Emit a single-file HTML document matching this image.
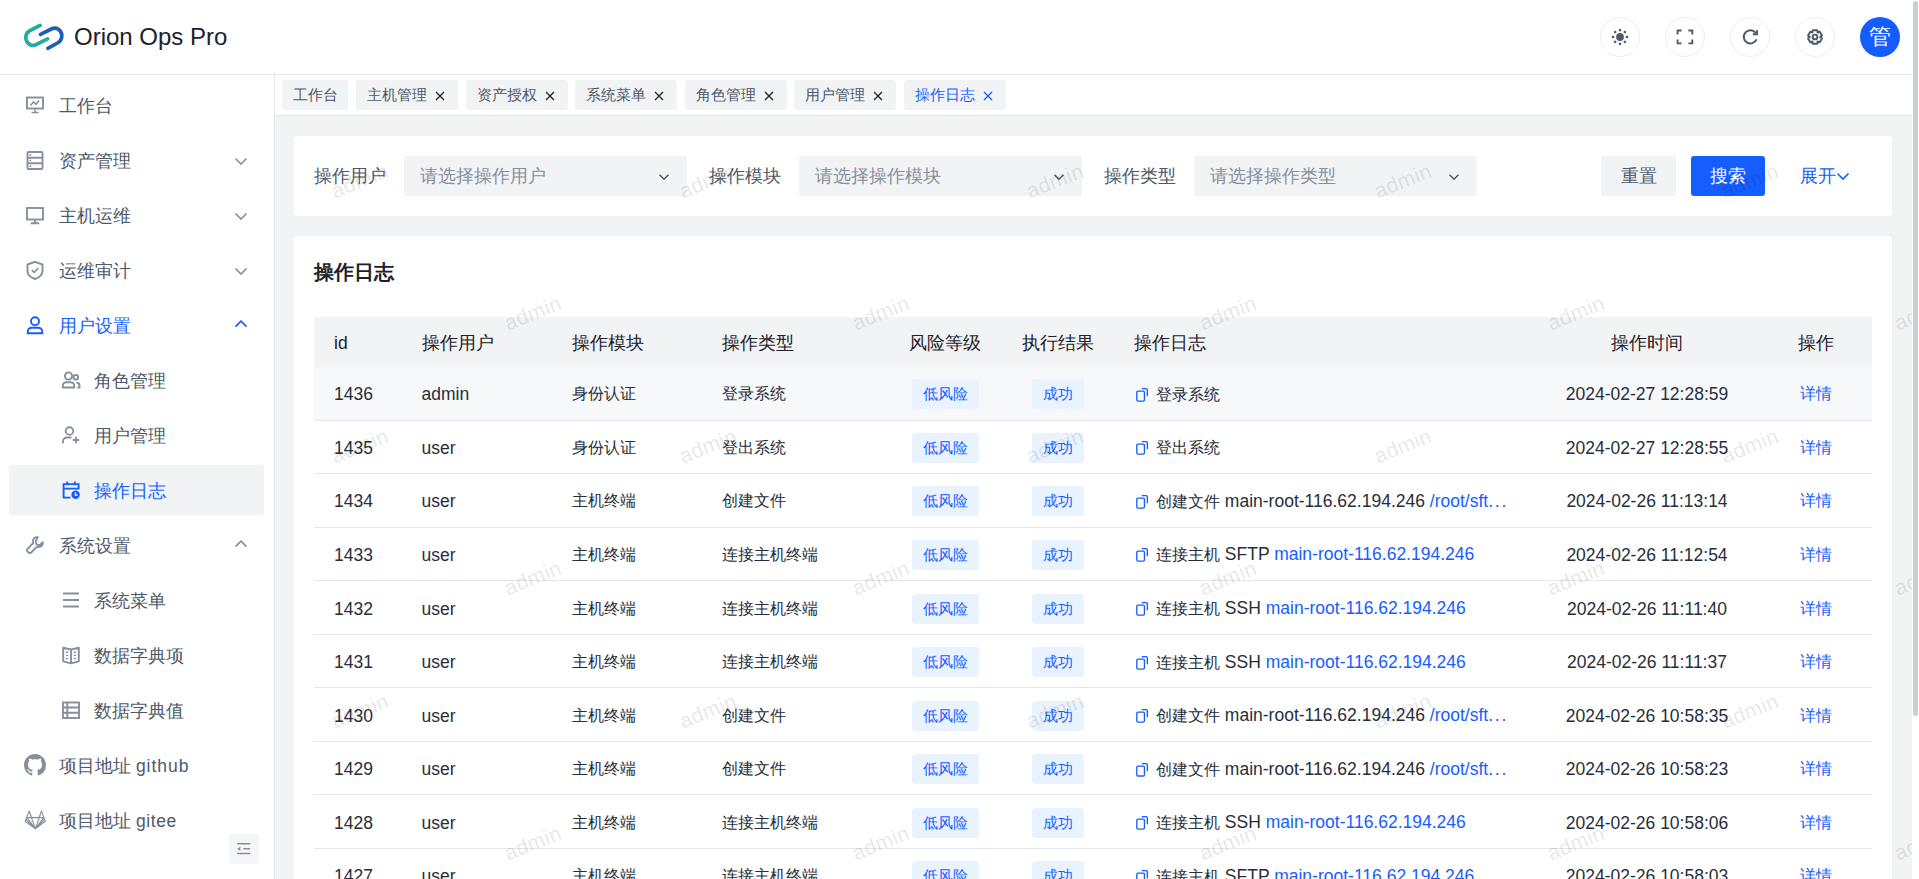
<!DOCTYPE html>
<html><head><meta charset="utf-8"><style>
*{box-sizing:border-box;margin:0;padding:0}
html,body{width:1919px;height:879px;overflow:hidden;background:#fff;font-family:"Liberation Sans",sans-serif;color:#1d2129}
.a{position:absolute}
#header{position:absolute;left:0;top:0;width:1912px;height:75px;background:#fff;border-bottom:1px solid #e5e6eb}
#sider{position:absolute;left:0;top:75px;width:275px;height:804px;background:#fff;border-right:1px solid #e5e6eb}
#tabs{position:absolute;left:275px;top:75px;width:1637px;height:41px;background:#fff;border-bottom:1px solid #e5e6eb}
#content{position:absolute;left:275px;top:116px;width:1637px;height:763px;background:#f2f3f5}
#sb{position:absolute;left:1912px;top:0;width:7px;height:879px;background:#fff}
#thumb{position:absolute;left:1913px;top:1px;width:5px;height:715px;border-radius:3px;background:#c9cdd4}
.title{position:absolute;left:74px;top:21px;font-size:24px;line-height:32px;color:#1d2129;white-space:nowrap}
.hbtn{position:absolute;top:17px;width:40px;height:40px;border-radius:50%;border:1px solid #eceef2;background:#fff}
.hbtn svg{position:absolute;left:0;top:0}
.avatar{position:absolute;left:1860px;top:17px;width:40px;height:40px;border-radius:50%;background:#165dff;color:#fff;font-size:22px;line-height:40px;text-align:center;font-weight:500}
.mi{position:absolute;left:0;width:275px;height:50px;font-size:17.5px;line-height:50px;color:#4e5969;white-space:nowrap}
.mi .t{position:absolute;left:59px;top:1px}
.mi.sub .t{left:94px}
.mi svg{position:absolute}
.mi.on{color:#165dff}
.actbg{position:absolute;left:9px;top:465px;width:255px;height:50px;background:#f2f3f5;border-radius:3px}
.tab{position:absolute;top:80px;height:30px;background:#f2f3f5;border-radius:3px;font-size:15px;line-height:30px;color:#4e5969;white-space:nowrap}
.tab .t{position:absolute;left:11px;top:0}
.tab svg{position:absolute;top:10px}
.tab.on{color:#165dff}

.td .z{font-size:0.9em}
.tab .z{font-size:1em}
.wm{position:absolute;width:80px;height:30px;line-height:30px;text-align:center;font-size:21px;color:rgba(0,0,0,0.11);transform:rotate(-22deg);white-space:nowrap;letter-spacing:0.5px}
.card{position:absolute;background:#fff;border-radius:4px}
.lab{position:absolute;height:40px;line-height:40px;font-size:17.5px;color:#4e5969;white-space:nowrap}
.sel{position:absolute;width:283px;height:40px;background:#f2f3f5;border-radius:3px}
.sel .ph{position:absolute;left:16px;top:0;line-height:40px;font-size:17.5px;color:#86909c;white-space:nowrap}
.btn{position:absolute;height:40px;line-height:40px;text-align:center;font-size:17.5px;border-radius:3px;white-space:nowrap}
.th{position:absolute;height:50px;line-height:50px;font-size:17.5px;color:#1d2129;white-space:nowrap}
.tr{position:absolute;left:314px;width:1558px;border-bottom:1px solid #e5e6eb}
.td{position:absolute;top:1.5px;height:100%;display:flex;align-items:center;font-size:17.5px;color:#272e3a;white-space:nowrap}
.td.c{justify-content:center}
.tag{position:absolute;top:50%;margin-top:-14px;height:30px;line-height:30px;text-align:center;font-size:15px;color:#165dff;background:#e8f3ff;border-radius:3px}
.cp{margin-right:7px;flex:none}
</style></head><body>
<div id="header">
<svg class="a" style="left:20px;top:19px" width="48" height="36" viewBox="0 0 48 36">
<path d="M20.1 6.4 L9.5 11.9 C5.5 14 5 19.5 6.8 22.5 C8.6 25.8 12.5 27.3 15.5 25.8 L27.5 19.9" fill="none" stroke="#22aaa3" stroke-width="3.7" stroke-linecap="round"/>
<path d="M20.5 15.4 L31.3 10 C36 7.6 41.5 10.5 41.8 16.5 C42 20.5 40 22.5 37.5 24 L27.9 29.3" fill="none" stroke="#1d5fb3" stroke-width="3.7" stroke-linecap="round"/>
</svg>
<div class="title">Orion Ops Pro</div>
</div>
<div class="hbtn" style="left:1600px"><svg width="40" height="40" style="left:-1px;top:-1px"><circle cx="20" cy="20" r="3.9" fill="#4e5969"/><rect x="18.85" y="11.95" width="2.3" height="2.3" fill="#4e5969" transform="rotate(0 20.00 13.10)"/><rect x="23.73" y="13.97" width="2.3" height="2.3" fill="#4e5969" transform="rotate(45 24.88 15.12)"/><rect x="25.75" y="18.85" width="2.3" height="2.3" fill="#4e5969" transform="rotate(90 26.90 20.00)"/><rect x="23.73" y="23.73" width="2.3" height="2.3" fill="#4e5969" transform="rotate(135 24.88 24.88)"/><rect x="18.85" y="25.75" width="2.3" height="2.3" fill="#4e5969" transform="rotate(180 20.00 26.90)"/><rect x="13.97" y="23.73" width="2.3" height="2.3" fill="#4e5969" transform="rotate(225 15.12 24.88)"/><rect x="11.95" y="18.85" width="2.3" height="2.3" fill="#4e5969" transform="rotate(270 13.10 20.00)"/><rect x="13.97" y="13.97" width="2.3" height="2.3" fill="#4e5969" transform="rotate(315 15.12 15.12)"/></svg></div>
<div class="hbtn" style="left:1665px"><svg width="40" height="40" style="left:-1px;top:-1px" fill="none" stroke="#4e5969" stroke-width="1.9" stroke-linecap="butt">
<path d="M12.6 17.4V13.5H16.5 M23.4 13.5H27.3V17.4 M27.3 22.6V26.4H23.4 M16.5 26.4H12.6V22.6"/></svg></div>
<div class="hbtn" style="left:1730px"><svg width="40" height="40" style="left:-1px;top:-1px" fill="none" stroke="#4e5969" stroke-width="2">
<path d="M26.5 22.4 A6.6 6.6 0 1 1 25.6 15.8"/><path d="M27 13.2V17.2H22.8"/></svg></div>
<div class="hbtn" style="left:1795px"><svg width="40" height="40" style="left:-1px;top:-1px" fill="none" stroke="#4e5969" stroke-width="1.9" stroke-linejoin="round">
<path d="M17.83 13.24 L22.17 13.24 L22.90 15.57 L22.39 15.27 L24.77 14.74 L26.94 18.49 L25.29 20.30 L25.29 19.70 L26.94 21.51 L24.77 25.26 L22.39 24.73 L22.90 24.43 L22.17 26.76 L17.83 26.76 L17.10 24.43 L17.61 24.73 L15.23 25.26 L13.06 21.51 L14.71 19.70 L14.71 20.30 L13.06 18.49 L15.23 14.74 L17.61 15.27 L17.10 15.57Z"/><circle cx="20" cy="20" r="2.4"/></svg></div>
<div class="avatar"><span class="z">管</span></div>
<div id="sider"></div>
<div class="actbg"></div>
<div class="mi" style="top:80px;color:#4e5969">
<div class="a" style="left:25px;top:15px;width:20px;height:20px"><svg width="20" height="20" viewBox="0 0 20 20" fill="none" stroke="#86909c" stroke-width="1.9"><rect x="2" y="2.5" width="16" height="11"/><path d="M10 13.5V18 M6.5 17.5H13.5 M5.5 10.5L8.5 6.8L11 9.3L14 5.5" stroke-width="1.5"/></svg></div>
<span class="t"><span class="z">工作台</span></span>
</div>
<div class="mi" style="top:135px;color:#4e5969">
<div class="a" style="left:25px;top:15px;width:20px;height:20px"><svg width="20" height="20" viewBox="0 0 20 20" fill="none" stroke="#86909c" stroke-width="1.9"><rect x="2.5" y="2" width="15" height="17" rx="1"/><path d="M2.5 7.7H17.5 M2.5 13.3H17.5"/><path d="M4.6 4.85h1.6 M4.6 10.5h1.6 M4.6 16.15h1.6" stroke-width="1.6"/></svg></div>
<span class="t"><span class="z">资产管理</span></span>
</div>
<svg class="a" style="left:234px;top:154px" width="14" height="14" fill="none" stroke="#86909c" stroke-width="1.6"><path d="M1.5 4.5L7 10L12.5 4.5"/></svg>
<div class="mi" style="top:190px;color:#4e5969">
<div class="a" style="left:25px;top:15px;width:20px;height:20px"><svg width="20" height="20" viewBox="0 0 20 20" fill="none" stroke="#86909c" stroke-width="1.9"><rect x="2" y="3" width="16" height="11.5"/><path d="M10 14.5V18.2 M5.8 18.2H14.2"/></svg></div>
<span class="t"><span class="z">主机运维</span></span>
</div>
<svg class="a" style="left:234px;top:209px" width="14" height="14" fill="none" stroke="#86909c" stroke-width="1.6"><path d="M1.5 4.5L7 10L12.5 4.5"/></svg>
<div class="mi" style="top:245px;color:#4e5969">
<div class="a" style="left:25px;top:15px;width:20px;height:20px"><svg width="20" height="20" viewBox="0 0 20 20" fill="none" stroke="#86909c" stroke-width="1.9"><path d="M10 1.8L17.5 4.5V11C17.5 15 13.5 17.8 10 19C6.5 17.8 2.5 15 2.5 11V4.5Z"/><path d="M6.8 10.2L9.2 12.4L13.4 8" stroke-width="1.7"/></svg></div>
<span class="t"><span class="z">运维审计</span></span>
</div>
<svg class="a" style="left:234px;top:264px" width="14" height="14" fill="none" stroke="#86909c" stroke-width="1.6"><path d="M1.5 4.5L7 10L12.5 4.5"/></svg>
<div class="mi on" style="top:300px;color:#165dff">
<div class="a" style="left:25px;top:15px;width:20px;height:20px"><svg width="20" height="20" viewBox="0 0 20 20" fill="none" stroke="#165dff" stroke-width="1.9"><circle cx="10" cy="6.3" r="4"/><path d="M2.8 18.2V16.5C2.8 14.3 4.6 12.8 6.8 12.8H13.2C15.4 12.8 17.2 14.3 17.2 16.5V18.2Z"/></svg></div>
<span class="t"><span class="z">用户设置</span></span>
</div>
<svg class="a" style="left:234px;top:319px" width="14" height="14" fill="none" stroke="#165dff" stroke-width="1.6"><path d="M1.5 7.6L7 2.1L12.5 7.6"/></svg>
<div class="mi sub" style="top:355px;color:#4e5969">
<div class="a" style="left:61px;top:15px;width:20px;height:20px"><svg width="20" height="20" viewBox="0 0 20 20" fill="none" stroke="#86909c" stroke-width="1.9"><circle cx="7.5" cy="6" r="3.6"/><path d="M1.8 17.5V15.8C1.8 13.8 3.4 12.3 5.4 12.3H9.6C11.6 12.3 13.2 13.8 13.2 15.8V17.5Z"/><circle cx="14.8" cy="7.3" r="2.3"/><path d="M15.5 12.5C17.3 12.7 18.5 14 18.5 15.8V17.5H16.4"/></svg></div>
<span class="t"><span class="z">角色管理</span></span>
</div>
<div class="mi sub" style="top:410px;color:#4e5969">
<div class="a" style="left:61px;top:15px;width:20px;height:20px"><svg width="20" height="20" viewBox="0 0 20 20" fill="none" stroke="#86909c" stroke-width="1.9"><circle cx="8.5" cy="6" r="3.8"/><path d="M2 18.2V16.5C2 14.2 3.8 12.5 6 12.5H10.5 M15 11.8V18.2 M11.8 15H18.2"/></svg></div>
<span class="t"><span class="z">用户管理</span></span>
</div>
<div class="mi sub on" style="top:465px;color:#165dff">
<div class="a" style="left:61px;top:15px;width:20px;height:20px"><svg width="20" height="20" viewBox="0 0 20 20" fill="none" stroke="#165dff" stroke-width="1.9"><path d="M9.5 17.6H2.6V4.1H17.6V9.6 M2.6 8.6H17.6 M6.2 1.6V5.2 M13.8 1.6V5.2"/><circle cx="14.6" cy="14.8" r="4.2" fill="#165dff" stroke="none"/><path d="M14.4 12.6V15.2H16.6" stroke="#fff" stroke-width="1.3"/></svg></div>
<span class="t"><span class="z">操作日志</span></span>
</div>
<div class="mi" style="top:520px;color:#4e5969">
<div class="a" style="left:25px;top:15px;width:20px;height:20px"><svg width="20" height="20" viewBox="0 0 20 20" fill="none" stroke="#86909c" stroke-width="1.9"><path d="M12.8 2.2C10.3 1.6 7.8 3.7 8 6.3C8 6.9 8.1 7.5 8.3 8L2.5 13.8C1.8 14.5 1.8 15.8 2.5 16.5L3.5 17.5C4.2 18.2 5.5 18.2 6.2 17.5L12 11.7C12.5 11.9 13.1 12 13.7 12C16.3 12.2 18.4 9.7 17.8 7.2L14.8 10.2L11.6 9.4L10.8 6.2Z" stroke-linejoin="round"/></svg></div>
<span class="t"><span class="z">系统设置</span></span>
</div>
<svg class="a" style="left:234px;top:539px" width="14" height="14" fill="none" stroke="#86909c" stroke-width="1.6"><path d="M1.5 7.6L7 2.1L12.5 7.6"/></svg>
<div class="mi sub" style="top:575px;color:#4e5969">
<div class="a" style="left:61px;top:15px;width:20px;height:20px"><svg width="20" height="20" viewBox="0 0 20 20" fill="none" stroke="#86909c" stroke-width="1.9"><path d="M2 3.5H18 M2 10H18 M2 16.5H18"/></svg></div>
<span class="t"><span class="z">系统菜单</span></span>
</div>
<div class="mi sub" style="top:630px;color:#4e5969">
<div class="a" style="left:61px;top:15px;width:20px;height:20px"><svg width="20" height="20" viewBox="0 0 20 20" fill="none" stroke="#86909c" stroke-width="1.9" stroke-width="1.7"><path d="M10 4.5V18.3 M2.2 2.8L10 4.5L17.8 2.8V16.3L10 18.3L2.2 16.3Z" stroke-linejoin="round"/><path d="M5 7.2H7.2 M5 10.4H7.2 M5 13.6H7.2 M12.8 7.2H15 M12.8 10.4H15 M12.8 13.6H15" stroke-width="1.4"/></svg></div>
<span class="t"><span class="z">数据字典项</span></span>
</div>
<div class="mi sub" style="top:685px;color:#4e5969">
<div class="a" style="left:61px;top:15px;width:20px;height:20px"><svg width="20" height="20" viewBox="0 0 20 20" fill="none" stroke="#86909c" stroke-width="1.9"><rect x="2" y="2.5" width="16" height="15.5"/><path d="M2 7.5H18 M2 12.7H18 M6.3 2.5V18"/></svg></div>
<span class="t"><span class="z">数据字典值</span></span>
</div>
<div class="mi" style="top:740px;color:#4e5969">
<div class="a" style="left:24px;top:14px"><svg width="22" height="22" viewBox="0 0 16 16"><path fill="#86909c" d="M8 0C3.58 0 0 3.58 0 8c0 3.54 2.29 6.53 5.47 7.59.4.07.55-.17.55-.38 0-.19-.01-.82-.01-1.49-2.01.37-2.53-.49-2.69-.94-.09-.23-.48-.94-.82-1.13-.28-.15-.68-.52-.01-.53.63-.01 1.08.58 1.23.82.72 1.21 1.87.87 2.33.66.07-.52.28-.87.51-1.07-1.78-.2-3.640-.89-3.64-3.95 0-.87.31-1.59.82-2.15-.08-.2-.36-1.02.08-2.12 0 0 .67-.21 2.2.82.64-.18 1.32-.27 2-.27.68 0 1.360.09 2 .27 1.53-1.04 2.2-.82 2.2-.82.44 1.1.16 1.92.08 2.12.51.56.82 1.27.82 2.15 0 3.07-1.870 3.75-3.650 3.95.29.25.54.73.54 1.48 0 1.07-.01 1.93-.01 2.2 0 .21.15.46.55.38A8.013 8.013 0 0016 8c0-4.42-3.58-8-8-8z"/></svg></div>
<span class="t"><span class="z">项目地址</span> <span style="letter-spacing:1px">github</span></span>
</div>
<div class="mi" style="top:795px;color:#4e5969">
<div class="a" style="left:20px;top:10px"><svg width="30" height="30" viewBox="0 0 30 30" fill="none" stroke="#86909c" stroke-width="1.1" stroke-linejoin="round"><path d="M9.1 6.1L5.1 16.4L15.4 23.9L25.3 16.4L21.5 6.1L18.9 12.6H11.7Z M6.9 12.6H23.7 M9.1 6.1L15.4 23.9L21.5 6.1 M6.9 12.6L15.4 23.9L23.7 12.6 M6 14.5L15.4 23.9L24.6 14.5"/></svg></div>
<span class="t"><span class="z">项目地址</span> <span style="letter-spacing:0.6px">gitee</span></span>
</div>
<div class="a" style="left:229px;top:834px;width:30px;height:30px;background:#f5f6f8;border-radius:3px"><svg class="a" style="left:7px;top:7px" width="16" height="16" fill="none" stroke="#86909c" stroke-width="1.5"><path d="M1.2 2.8H14.2 M7.3 7.8H14.2 M1.2 12.6H14.2"/><path d="M4.3 5.7L1.2 7.8L4.3 9.9Z" fill="#86909c" stroke="none"/></svg></div>
<div id="tabs"></div>
<div class="tab" style="left:282px;width:66px"><span class="t"><span class="z">工作台</span></span>
</div>
<div class="tab" style="left:356px;width:102px"><span class="t"><span class="z">主机管理</span></span>
<svg style="left:79px;top:10.5px" width="10" height="10" fill="none" stroke="#1d2129" stroke-width="1.3"><path d="M1 1L9 9M9 1L1 9"/></svg>
</div>
<div class="tab" style="left:466px;width:102px"><span class="t"><span class="z">资产授权</span></span>
<svg style="left:79px;top:10.5px" width="10" height="10" fill="none" stroke="#1d2129" stroke-width="1.3"><path d="M1 1L9 9M9 1L1 9"/></svg>
</div>
<div class="tab" style="left:575px;width:102px"><span class="t"><span class="z">系统菜单</span></span>
<svg style="left:79px;top:10.5px" width="10" height="10" fill="none" stroke="#1d2129" stroke-width="1.3"><path d="M1 1L9 9M9 1L1 9"/></svg>
</div>
<div class="tab" style="left:685px;width:102px"><span class="t"><span class="z">角色管理</span></span>
<svg style="left:79px;top:10.5px" width="10" height="10" fill="none" stroke="#1d2129" stroke-width="1.3"><path d="M1 1L9 9M9 1L1 9"/></svg>
</div>
<div class="tab" style="left:794px;width:102px"><span class="t"><span class="z">用户管理</span></span>
<svg style="left:79px;top:10.5px" width="10" height="10" fill="none" stroke="#1d2129" stroke-width="1.3"><path d="M1 1L9 9M9 1L1 9"/></svg>
</div>
<div class="tab on" style="left:904px;width:102px"><span class="t"><span class="z">操作日志</span></span>
<svg style="left:79px;top:10.5px" width="10" height="10" fill="none" stroke="#165dff" stroke-width="1.3"><path d="M1 1L9 9M9 1L1 9"/></svg>
</div>
<div id="content"></div>
<div class="card" style="left:294px;top:136px;width:1598px;height:80px"></div>
<div class="lab" style="left:314px;top:156px"><span class="z">操作用户</span></div>
<div class="sel" style="left:404px;top:156px"><span class="ph"><span class="z">请选择操作用户</span></span><svg class="a" style="left:253.5px;top:15px" width="12" height="12" fill="none" stroke="#4e5969" stroke-width="1.5"><path d="M1.5 3.8L6 8.3L10.5 3.8"/></svg></div>
<div class="lab" style="left:709px;top:156px"><span class="z">操作模块</span></div>
<div class="sel" style="left:799px;top:156px"><span class="ph"><span class="z">请选择操作模块</span></span><svg class="a" style="left:253.5px;top:15px" width="12" height="12" fill="none" stroke="#4e5969" stroke-width="1.5"><path d="M1.5 3.8L6 8.3L10.5 3.8"/></svg></div>
<div class="lab" style="left:1104px;top:156px"><span class="z">操作类型</span></div>
<div class="sel" style="left:1194px;top:156px"><span class="ph"><span class="z">请选择操作类型</span></span><svg class="a" style="left:253.5px;top:15px" width="12" height="12" fill="none" stroke="#4e5969" stroke-width="1.5"><path d="M1.5 3.8L6 8.3L10.5 3.8"/></svg></div>
<div class="btn" style="left:1601px;top:156px;width:75px;background:#f2f3f5;color:#4e5969"><span class="z">重置</span></div>
<div class="btn" style="left:1691px;top:156px;width:74px;background:#165dff;color:#fff"><span class="z">搜索</span></div>
<div class="a" style="left:1800px;top:156px;height:40px;line-height:40px;font-size:17.5px;color:#165dff;white-space:nowrap"><span class="z">展开</span></div>
<svg class="a" style="left:1836px;top:169px" width="14" height="14" fill="none" stroke="#165dff" stroke-width="1.6"><path d="M1.5 4.5L7 10L12.5 4.5"/></svg>
<div class="card" style="left:294px;top:236px;width:1598px;height:700px"></div>
<div class="a" style="left:314px;top:257px;font-size:20px;line-height:30px;font-weight:bold;color:#1d2129;white-space:nowrap"><span class="z">操作日志</span></div>
<div class="a" style="left:314px;top:317px;width:1558px;height:50px;background:#f2f3f5"></div>
<div class="th" style="left:334.00px;top:318px">id</div>
<div class="th" style="left:421.50px;top:318px"><span class="z">操作用户</span></div>
<div class="th" style="left:571.50px;top:318px"><span class="z">操作模块</span></div>
<div class="th" style="left:721.50px;top:318px"><span class="z">操作类型</span></div>
<div class="th" style="left:889.00px;top:318px;width:112.50px;text-align:center"><span class="z">风险等级</span></div>
<div class="th" style="left:1001.50px;top:318px;width:112.50px;text-align:center"><span class="z">执行结果</span></div>
<div class="th" style="left:1134.00px;top:318px"><span class="z">操作日志</span></div>
<div class="th" style="left:1534.50px;top:318px;width:225.00px;text-align:center"><span class="z">操作时间</span></div>
<div class="th" style="left:1759.50px;top:318px;width:112.50px;text-align:center"><span class="z">操作</span></div>
<div class="tr" style="top:367.00px;height:53.56px;background:#f7f8fa">
<div class="td" style="left:20px">1436</div>
<div class="td" style="left:107.5px">admin</div>
<div class="td" style="left:257.5px"><span class="z">身份认证</span></div>
<div class="td" style="left:407.5px"><span class="z">登录系统</span></div>
<div class="tag" style="left:598px;width:67px"><span class="z">低风险</span></div>
<div class="tag" style="left:718px;width:52px"><span class="z">成功</span></div>
<div class="td" style="left:820px"><svg class="cp" width="15" height="16" fill="none" stroke="#165dff" stroke-width="1.35"><path d="M7.8 1.6H12.1Q13.35 1.6 13.35 2.85V9.3"/><rect x="2.8" y="4.15" width="7.65" height="9.9" rx="1.2"/></svg><span class="lg"><span class="z">登录系统</span></span></div>
<div class="td" style="left:1220.5px;width:225px;justify-content:center">2024-02-27 12:28:59</div>
<div class="td" style="left:1445.5px;width:112.5px;justify-content:center;color:#165dff"><span class="z">详情</span></div>
</div>
<div class="tr" style="top:420.56px;height:53.56px;background:transparent">
<div class="td" style="left:20px">1435</div>
<div class="td" style="left:107.5px">user</div>
<div class="td" style="left:257.5px"><span class="z">身份认证</span></div>
<div class="td" style="left:407.5px"><span class="z">登出系统</span></div>
<div class="tag" style="left:598px;width:67px"><span class="z">低风险</span></div>
<div class="tag" style="left:718px;width:52px"><span class="z">成功</span></div>
<div class="td" style="left:820px"><svg class="cp" width="15" height="16" fill="none" stroke="#165dff" stroke-width="1.35"><path d="M7.8 1.6H12.1Q13.35 1.6 13.35 2.85V9.3"/><rect x="2.8" y="4.15" width="7.65" height="9.9" rx="1.2"/></svg><span class="lg"><span class="z">登出系统</span></span></div>
<div class="td" style="left:1220.5px;width:225px;justify-content:center">2024-02-27 12:28:55</div>
<div class="td" style="left:1445.5px;width:112.5px;justify-content:center;color:#165dff"><span class="z">详情</span></div>
</div>
<div class="tr" style="top:474.12px;height:53.56px;background:transparent">
<div class="td" style="left:20px">1434</div>
<div class="td" style="left:107.5px">user</div>
<div class="td" style="left:257.5px"><span class="z">主机终端</span></div>
<div class="td" style="left:407.5px"><span class="z">创建文件</span></div>
<div class="tag" style="left:598px;width:67px"><span class="z">低风险</span></div>
<div class="tag" style="left:718px;width:52px"><span class="z">成功</span></div>
<div class="td" style="left:820px"><svg class="cp" width="15" height="16" fill="none" stroke="#165dff" stroke-width="1.35"><path d="M7.8 1.6H12.1Q13.35 1.6 13.35 2.85V9.3"/><rect x="2.8" y="4.15" width="7.65" height="9.9" rx="1.2"/></svg><span class="lg"><span class="z">创建文件</span> main-root-116.62.194.246 <span style="color:#165dff">/root/sft<span style="letter-spacing:1.8px">...</span></span></span></div>
<div class="td" style="left:1220.5px;width:225px;justify-content:center">2024-02-26 11:13:14</div>
<div class="td" style="left:1445.5px;width:112.5px;justify-content:center;color:#165dff"><span class="z">详情</span></div>
</div>
<div class="tr" style="top:527.68px;height:53.56px;background:transparent">
<div class="td" style="left:20px">1433</div>
<div class="td" style="left:107.5px">user</div>
<div class="td" style="left:257.5px"><span class="z">主机终端</span></div>
<div class="td" style="left:407.5px"><span class="z">连接主机终端</span></div>
<div class="tag" style="left:598px;width:67px"><span class="z">低风险</span></div>
<div class="tag" style="left:718px;width:52px"><span class="z">成功</span></div>
<div class="td" style="left:820px"><svg class="cp" width="15" height="16" fill="none" stroke="#165dff" stroke-width="1.35"><path d="M7.8 1.6H12.1Q13.35 1.6 13.35 2.85V9.3"/><rect x="2.8" y="4.15" width="7.65" height="9.9" rx="1.2"/></svg><span class="lg"><span class="z">连接主机</span> SFTP <span style="color:#165dff">main-root-116.62.194.246</span></span></div>
<div class="td" style="left:1220.5px;width:225px;justify-content:center">2024-02-26 11:12:54</div>
<div class="td" style="left:1445.5px;width:112.5px;justify-content:center;color:#165dff"><span class="z">详情</span></div>
</div>
<div class="tr" style="top:581.24px;height:53.56px;background:transparent">
<div class="td" style="left:20px">1432</div>
<div class="td" style="left:107.5px">user</div>
<div class="td" style="left:257.5px"><span class="z">主机终端</span></div>
<div class="td" style="left:407.5px"><span class="z">连接主机终端</span></div>
<div class="tag" style="left:598px;width:67px"><span class="z">低风险</span></div>
<div class="tag" style="left:718px;width:52px"><span class="z">成功</span></div>
<div class="td" style="left:820px"><svg class="cp" width="15" height="16" fill="none" stroke="#165dff" stroke-width="1.35"><path d="M7.8 1.6H12.1Q13.35 1.6 13.35 2.85V9.3"/><rect x="2.8" y="4.15" width="7.65" height="9.9" rx="1.2"/></svg><span class="lg"><span class="z">连接主机</span> SSH <span style="color:#165dff">main-root-116.62.194.246</span></span></div>
<div class="td" style="left:1220.5px;width:225px;justify-content:center">2024-02-26 11:11:40</div>
<div class="td" style="left:1445.5px;width:112.5px;justify-content:center;color:#165dff"><span class="z">详情</span></div>
</div>
<div class="tr" style="top:634.80px;height:53.56px;background:transparent">
<div class="td" style="left:20px">1431</div>
<div class="td" style="left:107.5px">user</div>
<div class="td" style="left:257.5px"><span class="z">主机终端</span></div>
<div class="td" style="left:407.5px"><span class="z">连接主机终端</span></div>
<div class="tag" style="left:598px;width:67px"><span class="z">低风险</span></div>
<div class="tag" style="left:718px;width:52px"><span class="z">成功</span></div>
<div class="td" style="left:820px"><svg class="cp" width="15" height="16" fill="none" stroke="#165dff" stroke-width="1.35"><path d="M7.8 1.6H12.1Q13.35 1.6 13.35 2.85V9.3"/><rect x="2.8" y="4.15" width="7.65" height="9.9" rx="1.2"/></svg><span class="lg"><span class="z">连接主机</span> SSH <span style="color:#165dff">main-root-116.62.194.246</span></span></div>
<div class="td" style="left:1220.5px;width:225px;justify-content:center">2024-02-26 11:11:37</div>
<div class="td" style="left:1445.5px;width:112.5px;justify-content:center;color:#165dff"><span class="z">详情</span></div>
</div>
<div class="tr" style="top:688.36px;height:53.56px;background:transparent">
<div class="td" style="left:20px">1430</div>
<div class="td" style="left:107.5px">user</div>
<div class="td" style="left:257.5px"><span class="z">主机终端</span></div>
<div class="td" style="left:407.5px"><span class="z">创建文件</span></div>
<div class="tag" style="left:598px;width:67px"><span class="z">低风险</span></div>
<div class="tag" style="left:718px;width:52px"><span class="z">成功</span></div>
<div class="td" style="left:820px"><svg class="cp" width="15" height="16" fill="none" stroke="#165dff" stroke-width="1.35"><path d="M7.8 1.6H12.1Q13.35 1.6 13.35 2.85V9.3"/><rect x="2.8" y="4.15" width="7.65" height="9.9" rx="1.2"/></svg><span class="lg"><span class="z">创建文件</span> main-root-116.62.194.246 <span style="color:#165dff">/root/sft<span style="letter-spacing:1.8px">...</span></span></span></div>
<div class="td" style="left:1220.5px;width:225px;justify-content:center">2024-02-26 10:58:35</div>
<div class="td" style="left:1445.5px;width:112.5px;justify-content:center;color:#165dff"><span class="z">详情</span></div>
</div>
<div class="tr" style="top:741.92px;height:53.56px;background:transparent">
<div class="td" style="left:20px">1429</div>
<div class="td" style="left:107.5px">user</div>
<div class="td" style="left:257.5px"><span class="z">主机终端</span></div>
<div class="td" style="left:407.5px"><span class="z">创建文件</span></div>
<div class="tag" style="left:598px;width:67px"><span class="z">低风险</span></div>
<div class="tag" style="left:718px;width:52px"><span class="z">成功</span></div>
<div class="td" style="left:820px"><svg class="cp" width="15" height="16" fill="none" stroke="#165dff" stroke-width="1.35"><path d="M7.8 1.6H12.1Q13.35 1.6 13.35 2.85V9.3"/><rect x="2.8" y="4.15" width="7.65" height="9.9" rx="1.2"/></svg><span class="lg"><span class="z">创建文件</span> main-root-116.62.194.246 <span style="color:#165dff">/root/sft<span style="letter-spacing:1.8px">...</span></span></span></div>
<div class="td" style="left:1220.5px;width:225px;justify-content:center">2024-02-26 10:58:23</div>
<div class="td" style="left:1445.5px;width:112.5px;justify-content:center;color:#165dff"><span class="z">详情</span></div>
</div>
<div class="tr" style="top:795.48px;height:53.56px;background:transparent">
<div class="td" style="left:20px">1428</div>
<div class="td" style="left:107.5px">user</div>
<div class="td" style="left:257.5px"><span class="z">主机终端</span></div>
<div class="td" style="left:407.5px"><span class="z">连接主机终端</span></div>
<div class="tag" style="left:598px;width:67px"><span class="z">低风险</span></div>
<div class="tag" style="left:718px;width:52px"><span class="z">成功</span></div>
<div class="td" style="left:820px"><svg class="cp" width="15" height="16" fill="none" stroke="#165dff" stroke-width="1.35"><path d="M7.8 1.6H12.1Q13.35 1.6 13.35 2.85V9.3"/><rect x="2.8" y="4.15" width="7.65" height="9.9" rx="1.2"/></svg><span class="lg"><span class="z">连接主机</span> SSH <span style="color:#165dff">main-root-116.62.194.246</span></span></div>
<div class="td" style="left:1220.5px;width:225px;justify-content:center">2024-02-26 10:58:06</div>
<div class="td" style="left:1445.5px;width:112.5px;justify-content:center;color:#165dff"><span class="z">详情</span></div>
</div>
<div class="tr" style="top:849.04px;height:53.56px;background:transparent">
<div class="td" style="left:20px">1427</div>
<div class="td" style="left:107.5px">user</div>
<div class="td" style="left:257.5px"><span class="z">主机终端</span></div>
<div class="td" style="left:407.5px"><span class="z">连接主机终端</span></div>
<div class="tag" style="left:598px;width:67px"><span class="z">低风险</span></div>
<div class="tag" style="left:718px;width:52px"><span class="z">成功</span></div>
<div class="td" style="left:820px"><svg class="cp" width="15" height="16" fill="none" stroke="#165dff" stroke-width="1.35"><path d="M7.8 1.6H12.1Q13.35 1.6 13.35 2.85V9.3"/><rect x="2.8" y="4.15" width="7.65" height="9.9" rx="1.2"/></svg><span class="lg"><span class="z">连接主机</span> SFTP <span style="color:#165dff">main-root-116.62.194.246</span></span></div>
<div class="td" style="left:1220.5px;width:225px;justify-content:center">2024-02-26 10:58:03</div>
<div class="td" style="left:1445.5px;width:112.5px;justify-content:center;color:#165dff"><span class="z">详情</span></div>
</div>
<div class="a" style="left:275px;top:116px;width:1637px;height:763px;overflow:hidden;pointer-events:none">
<div class="wm" style="left:-302.5px;top:49.5px">admin</div>
<div class="wm" style="left:45.0px;top:49.5px">admin</div>
<div class="wm" style="left:392.5px;top:49.5px">admin</div>
<div class="wm" style="left:740.0px;top:49.5px">admin</div>
<div class="wm" style="left:1087.5px;top:49.5px">admin</div>
<div class="wm" style="left:1435.0px;top:49.5px">admin</div>
<div class="wm" style="left:1782.5px;top:49.5px">admin</div>
<div class="wm" style="left:-129.5px;top:182.1px">admin</div>
<div class="wm" style="left:218.0px;top:182.1px">admin</div>
<div class="wm" style="left:565.5px;top:182.1px">admin</div>
<div class="wm" style="left:913.0px;top:182.1px">admin</div>
<div class="wm" style="left:1260.5px;top:182.1px">admin</div>
<div class="wm" style="left:1608.0px;top:182.1px">admin</div>
<div class="wm" style="left:1955.5px;top:182.1px">admin</div>
<div class="wm" style="left:-302.5px;top:314.6px">admin</div>
<div class="wm" style="left:45.0px;top:314.6px">admin</div>
<div class="wm" style="left:392.5px;top:314.6px">admin</div>
<div class="wm" style="left:740.0px;top:314.6px">admin</div>
<div class="wm" style="left:1087.5px;top:314.6px">admin</div>
<div class="wm" style="left:1435.0px;top:314.6px">admin</div>
<div class="wm" style="left:1782.5px;top:314.6px">admin</div>
<div class="wm" style="left:-129.5px;top:447.2px">admin</div>
<div class="wm" style="left:218.0px;top:447.2px">admin</div>
<div class="wm" style="left:565.5px;top:447.2px">admin</div>
<div class="wm" style="left:913.0px;top:447.2px">admin</div>
<div class="wm" style="left:1260.5px;top:447.2px">admin</div>
<div class="wm" style="left:1608.0px;top:447.2px">admin</div>
<div class="wm" style="left:1955.5px;top:447.2px">admin</div>
<div class="wm" style="left:-302.5px;top:579.7px">admin</div>
<div class="wm" style="left:45.0px;top:579.7px">admin</div>
<div class="wm" style="left:392.5px;top:579.7px">admin</div>
<div class="wm" style="left:740.0px;top:579.7px">admin</div>
<div class="wm" style="left:1087.5px;top:579.7px">admin</div>
<div class="wm" style="left:1435.0px;top:579.7px">admin</div>
<div class="wm" style="left:1782.5px;top:579.7px">admin</div>
<div class="wm" style="left:-129.5px;top:712.2px">admin</div>
<div class="wm" style="left:218.0px;top:712.2px">admin</div>
<div class="wm" style="left:565.5px;top:712.2px">admin</div>
<div class="wm" style="left:913.0px;top:712.2px">admin</div>
<div class="wm" style="left:1260.5px;top:712.2px">admin</div>
<div class="wm" style="left:1608.0px;top:712.2px">admin</div>
<div class="wm" style="left:1955.5px;top:712.2px">admin</div>
<div class="wm" style="left:-302.5px;top:844.8px">admin</div>
<div class="wm" style="left:45.0px;top:844.8px">admin</div>
<div class="wm" style="left:392.5px;top:844.8px">admin</div>
<div class="wm" style="left:740.0px;top:844.8px">admin</div>
<div class="wm" style="left:1087.5px;top:844.8px">admin</div>
<div class="wm" style="left:1435.0px;top:844.8px">admin</div>
<div class="wm" style="left:1782.5px;top:844.8px">admin</div>
</div>
<div id="sb"></div><div id="thumb"></div>
</body></html>
